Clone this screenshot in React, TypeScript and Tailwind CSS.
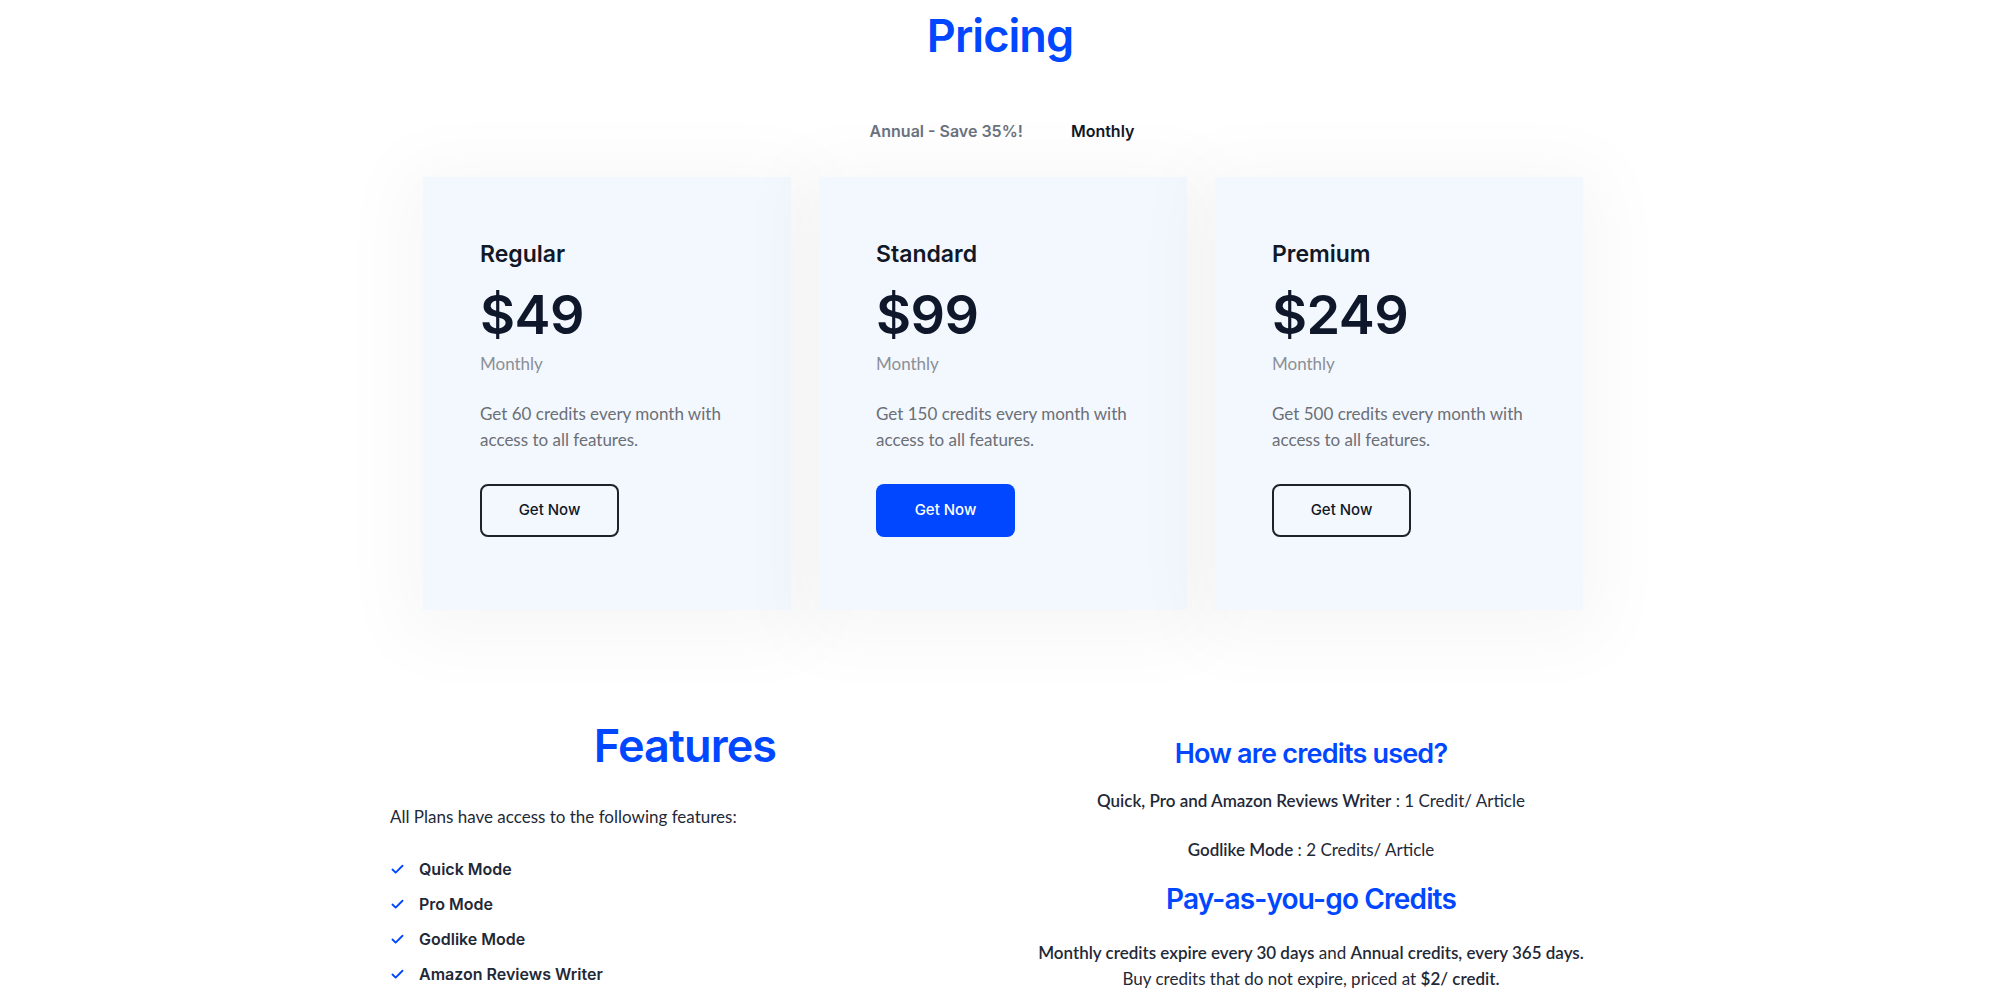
import { Check } from 'lucide-react';

const plans = [
  { name: 'Regular', price: '$49', credits: 60, primary: false },
  { name: 'Standard', price: '$99', credits: 150, primary: true },
  { name: 'Premium', price: '$249', credits: 500, primary: false },
];

const features = ['Quick Mode', 'Pro Mode', 'Godlike Mode', 'Amazon Reviews Writer'];

export default function App() {
  return (
    <div className="min-h-screen w-full bg-white font-['Inter',sans-serif] text-[#0f172a]">
      <h1 className="pt-[12px] text-center text-[45px] font-semibold leading-[48px] tracking-[-0.02em] text-[#0047ff]">
        Pricing
      </h1>

      {/* billing toggle */}
      <div className="mt-[59px] flex justify-center gap-[48px] pl-[4px] text-[16px] font-semibold leading-[24px]">
        <span className="text-[#6b7280]">Annual - Save 35%!</span>
        <span className="text-[#111827]">Monthly</span>
      </div>

      <div className="mx-auto mt-[34px] flex w-[1160px] translate-x-[3px] gap-[28px]">
        {plans.map((p) => (
          <div
            key={p.name}
            className="h-[433px] w-[368px] bg-[#f3f7fe] px-[57px] pt-[62px] shadow-[0_10px_70px_20px_rgba(0,0,0,0.035)]"
          >
            <h3 className="text-[23px] font-semibold leading-[30px] text-[#111827]">{p.name}</h3>
            <div className="mt-[16px] text-[54px] font-semibold leading-[60px] tracking-[-0.01em] text-[#0f172a]">
              {p.price}
            </div>
            <div className="mt-[7px] font-['Lato',sans-serif] text-[17px] leading-[24px] text-[#8b8f96]">Monthly</div>
            <p className="mt-[25px] w-[262px] font-['Lato',sans-serif] text-[17px] leading-[26px] text-[#6b6f76]">
              Get {p.credits} credits every month with access to all features.
            </p>
            <button
              className={`mt-[31px] flex h-[53px] w-[139px] items-center justify-center rounded-[8px] text-[15px] font-medium ${
                p.primary ? 'bg-[#0047ff] text-white' : 'border-2 border-[#1f2328] text-[#111827]'
              }`}
            >
              Get Now
            </button>
          </div>
        ))}
      </div>

      <div className="ml-[390px] mt-[110px] grid grid-cols-[590px_662px]">
        <div>
          <h2 className="text-center text-[45px] font-semibold leading-[52px] tracking-[-0.02em] text-[#0047ff]">
            Features
          </h2>
          <p className="mt-[33px] font-['Lato',sans-serif] text-[17px] leading-[24px] text-[#1f2937]">
            All Plans have access to the following features:
          </p>
          <ul className="mt-[28px] flex flex-col gap-[11px]">
            {features.map((f) => (
              <li key={f} className="flex h-[24px] items-center gap-[14px]">
                <Check className="h-[15px] w-[15px] text-[#0047ff]" strokeWidth={3} />
                <span className="text-[16px] font-semibold text-[#1f2937]">{f}</span>
              </li>
            ))}
          </ul>
        </div>

        <div className="pt-[16px] text-center">
          <h2 className="text-[27px] font-semibold leading-[36px] tracking-[-0.03em] text-[#0047ff]">
            How are credits used?
          </h2>
          <p className="mt-[17px] font-['Lato',sans-serif] text-[17px] leading-[24px] text-[#1f2937]">
            <b className="font-semibold">Quick, Pro and Amazon Reviews Writer</b> : 1 Credit/ Article
          </p>
          <p className="mt-[25px] font-['Lato',sans-serif] text-[17px] leading-[24px] text-[#1f2937]">
            <b className="font-semibold">Godlike Mode</b> : 2 Credits/ Article
          </p>
          <h2 className="mt-[19px] text-[28px] font-semibold leading-[36px] tracking-[-0.03em] text-[#0047ff]">
            Pay-as-you-go Credits
          </h2>
          <p className="mt-[23px] font-['Lato',sans-serif] text-[17px] leading-[26px] text-[#1f2937]">
            <b className="font-semibold">Monthly credits expire every 30 days</b> and{' '}
            <b className="font-semibold">Annual credits, every 365 days.</b>
            <br />
            Buy credits that do not expire, priced at <b className="font-semibold">$2/ credit.</b>
          </p>
        </div>
      </div>
    </div>
  );
}
